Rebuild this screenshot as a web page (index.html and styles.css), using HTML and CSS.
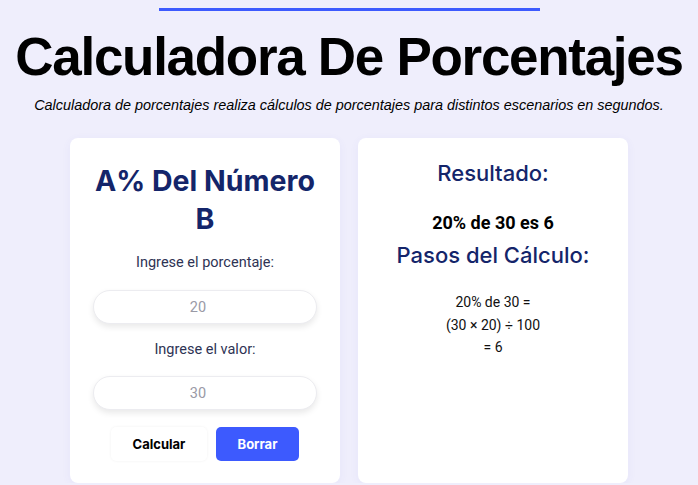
FILE: index.html
```html
<!DOCTYPE html>
<html lang="es">
<head>
<meta charset="utf-8">
<title>Calculadora De Porcentajes</title>
<link rel="stylesheet" href="styles.css">
</head>
<body>
<header class="hero">
  <div class="hero-bar"></div>
  <h1 class="hero-title">Calculadora De Porcentajes</h1>
  <p class="hero-sub">Calculadora de porcentajes realiza cálculos de porcentajes para distintos escenarios en segundos.</p>
</header>
<main class="panels">
  <section class="card form-card">
    <h2 class="card-title">A% Del Número B</h2>
    <label class="field-label" for="pct">Ingrese el porcentaje:</label>
    <input class="field" id="pct" type="text" placeholder="20">
    <label class="field-label" for="val">Ingrese el valor:</label>
    <input class="field" id="val" type="text" placeholder="30">
    <div class="actions">
      <button class="btn btn-light" type="button">Calcular</button>
      <button class="btn btn-primary" type="button">Borrar</button>
    </div>
  </section>
  <section class="card result-card">
    <h3 class="result-title">Resultado:</h3>
    <p class="result-value">20% de 30 es 6</p>
    <h3 class="steps-title">Pasos del Cálculo:</h3>
    <p class="steps">20% de 30 =<br>(30 × 20) ÷ 100<br>= 6</p>
  </section>
</main>
</body>
</html>
```
FILE: styles.css
```css
* { box-sizing: border-box; }

body {
  margin: 0;
  background: #efeefc;
  font-family: Roboto, "Liberation Sans", sans-serif;
  color: #111;
  overflow: hidden;
}

.hero {
  display: flex;
  flex-direction: column;
  align-items: center;
  padding-top: 8px;
}

.hero-bar {
  width: 381px;
  height: 3px;
  background: #3d5afe;
}

.hero-title {
  margin: 18px 0 0;
  font-family: "Liberation Sans", Arial, sans-serif;
  font-weight: 700;
  font-size: 53px;
  letter-spacing: -1.3px;
  line-height: 56px;
  white-space: nowrap;
  color: #000;
}

.hero-sub {
  margin: 12px 0 0;
  font-family: "Liberation Sans", Arial, sans-serif;
  font-style: italic;
  font-size: 14.4px;
  line-height: 17px;
  color: #000;
}

.panels {
  display: flex;
  justify-content: center;
  gap: 18px;
  margin-top: 24px;
}

.card {
  width: 270px;
  height: 345px;
  background: #fff;
  border-radius: 8px;
  box-shadow: 0 2px 10px rgba(90, 80, 200, 0.06);
  display: flex;
  flex-direction: column;
  align-items: center;
  text-align: center;
}

.form-card { padding: 24px 20px 0; }

.card-title {
  margin: 0;
  font-family: Inter, sans-serif;
  font-weight: 700;
  font-size: 28.5px;
  line-height: 38px;
  color: #14256a;
}

.field-label {
  margin-top: 15px;
  font-size: 14.5px;
  line-height: 20px;
  color: #2e3354;
}

.field {
  margin-top: 17px;
  width: 224px;
  height: 34px;
  padding: 0 14px 0 0;
  border: 1px solid #ececf0;
  border-radius: 17px;
  background: #fff;
  box-shadow: 0 3px 6px rgba(0, 0, 0, 0.09);
  text-align: center;
  font-family: Roboto, sans-serif;
  font-size: 14.5px;
  outline: none;
}

.field::placeholder { color: #9a9aa6; }

.field + .field-label { margin-top: 16px; }

.field-label + .field + .field-label + .field { margin-top: 16px; }

.actions {
  display: flex;
  gap: 9px;
  margin-top: 17px;
}

.btn {
  height: 34px;
  border-radius: 5px;
  border: 0;
  font-family: Inter, sans-serif;
  font-weight: 700;
  font-size: 13px;
  cursor: pointer;
}

.btn-light {
  width: 96px;
  background: #fff;
  color: #000;
  box-shadow: 0 0 3px rgba(0, 0, 0, 0.06);
}

.btn-primary {
  width: 83px;
  background: #3d5afe;
  color: #fff;
}

.result-card { padding-top: 22px; }

.result-title {
  margin: 0;
  font-family: Inter, sans-serif;
  font-weight: 500;
  font-size: 22px;
  line-height: 26px;
  color: #14256a;
}

.result-value {
  margin: 26px 0 0;
  font-weight: 700;
  font-size: 18px;
  line-height: 22px;
  color: #000;
}

.steps-title {
  margin: 7px 0 0;
  font-family: Inter, sans-serif;
  font-weight: 500;
  font-size: 22px;
  line-height: 28px;
  color: #14256a;
}

.steps {
  margin: 22px 0 0;
  font-size: 14px;
  line-height: 22.5px;
  color: #111;
}
```
